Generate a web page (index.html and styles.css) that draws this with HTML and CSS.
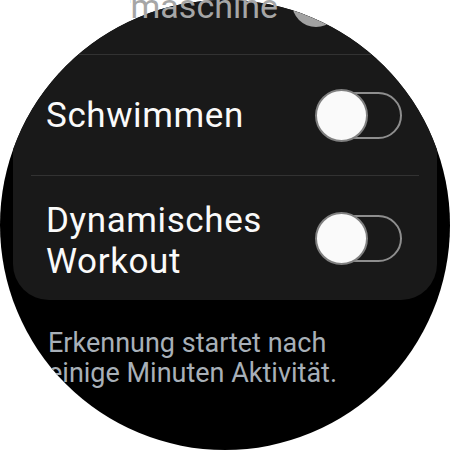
FILE: index.html
```html
<!DOCTYPE html>
<html lang="de">
<head>
<meta charset="utf-8">
<link rel="stylesheet" href="styles.css">
</head>
<body>
<div class="screen">
  <div class="circle">
    <div class="card">
      <div class="row row-partial">
        <div class="ghost-thumb"></div>
      </div>
      <div class="divider"></div>
      <div class="row row-one">
        <span class="label">Schwimmen</span>
        <div class="switch"><div class="track"></div><div class="thumb"></div></div>
      </div>
      <div class="divider"></div>
      <div class="row row-two">
        <span class="label label-two">Dynamisches<br>Workout</span>
        <div class="switch"><div class="track"></div><div class="thumb"></div></div>
      </div>
    </div>
    <p class="note">Erkennung startet nach<br>einige Minuten Aktivität.</p>
  </div>
  <div class="fade-title"><span>Rudermaschine</span></div>
</div>
</body>
</html>
```
FILE: styles.css
```css
html, body {
  margin: 0;
  padding: 0;
  background: #ffffff;
}
.screen {
  position: relative;
  width: 450px;
  height: 450px;
  overflow: hidden;
  font-family: Roboto, "Noto Sans", sans-serif;
}
.circle {
  width: 450px;
  height: 450px;
  border-radius: 50%;
  background: #000000;
  overflow: hidden;
  display: flex;
  flex-direction: column;
}
.card {
  margin: 0 13px;
  background: #191919;
  border-radius: 0 0 36px 36px;
  display: flex;
  flex-direction: column;
}
.row {
  display: flex;
  align-items: center;
  justify-content: space-between;
  padding: 0 35px 0 33px;
}
.row-partial {
  height: 54px;
  align-items: flex-start;
  justify-content: flex-start;
  padding: 0;
}
.ghost-thumb {
  width: 48px;
  height: 48px;
  border-radius: 50%;
  background: #a2a2a2;
  margin: -21px 0 0 279px;
}
.divider {
  height: 1px;
  background: #323232;
  margin: 0 18px;
}
.row-one {
  height: 120px;
}
.row-two {
  height: 124px;
}
.label {
  color: #fafafa;
  font-size: 35px;
  line-height: 41px;
  letter-spacing: 0.6px;
}
.label-two {
  margin-top: 6px;
}
.switch {
  display: grid;
  width: 87px;
  height: 53px;
}
.track, .thumb {
  grid-area: 1 / 1;
}
.track {
  justify-self: end;
  align-self: center;
  width: 80px;
  height: 47px;
  box-sizing: border-box;
  border: 2px solid #8e8e8e;
  border-radius: 24px;
}
.thumb {
  justify-self: start;
  align-self: center;
  width: 53px;
  height: 53px;
  box-sizing: border-box;
  border-radius: 50%;
  background: #fafafa;
  border: 2px solid #808080;
}
.note {
  margin: 28px 0 0 48px;
  color: #a8b0b8;
  font-size: 27px;
  line-height: 30px;
  white-space: nowrap;
}
.fade-title {
  position: absolute;
  left: 130px;
  top: 0;
  width: 148px;
  height: 30px;
  overflow: hidden;
  display: flex;
  justify-content: flex-end;
}
.fade-title span {
  font-size: 34px;
  line-height: 24px;
  margin-top: -6px;
  white-space: nowrap;
  color: #a6a6a6;
}
```
